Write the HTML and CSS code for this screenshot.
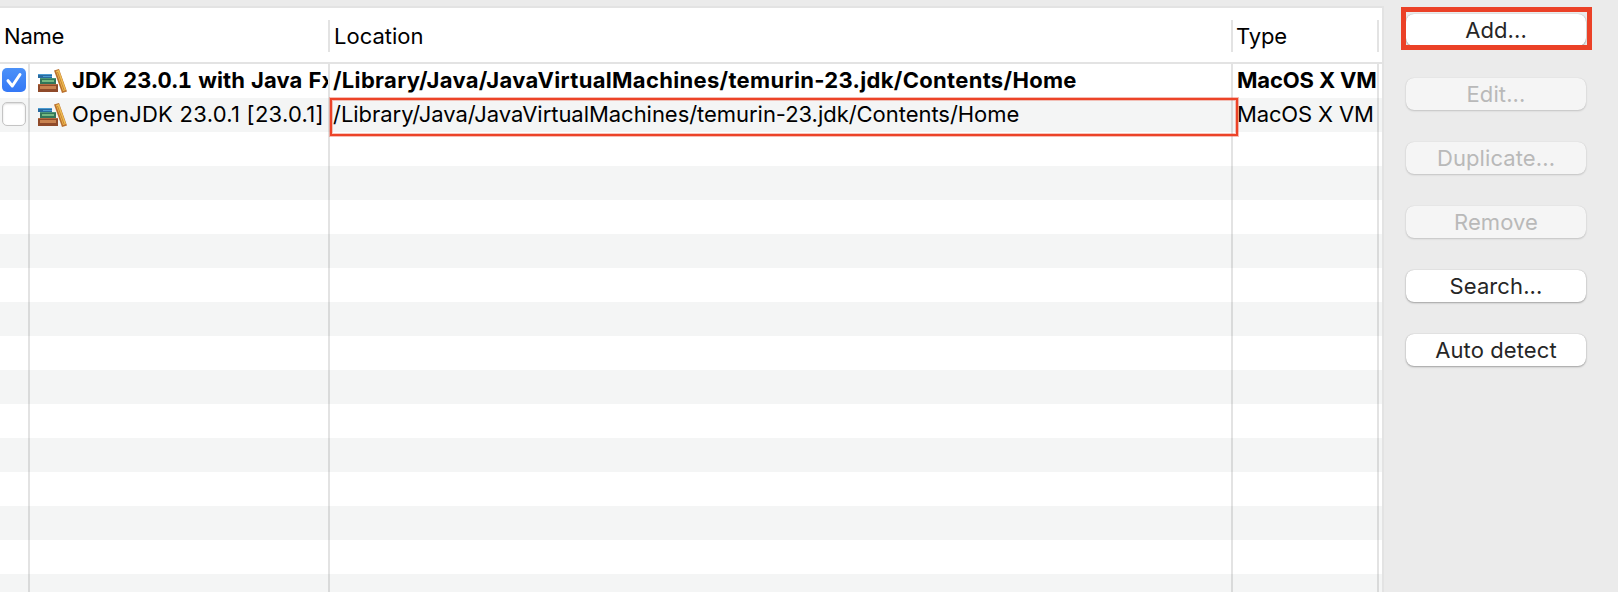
FILE: index.html
```html
<!DOCTYPE html>
<html lang="en">
<head>
<meta charset="utf-8">
<title>Installed JREs</title>
<link rel="stylesheet" href="styles.css">
</head>
<body>
<svg width="0" height="0" class="defs">
  <symbol id="books" viewBox="0 0 30 26">
    <path fill="#286aa0" d="M1 6h14v4H1z"/><path fill="#4b9bd0" d="M1 6h14v1H1zM6 8h9v1H6z"/>
    <path fill="#32765a" d="M3 10h16v6H3z"/><path fill="#75b982" d="M5 12h12v2H5z"/><path fill="#4a9677" d="M3 10h16v1H3z"/>
    <path fill="#8f4a2a" d="M1 16h20v8H1z"/><path fill="#c8824f" d="M3 18h16v3H3z"/><path fill="#b36b40" d="M1 16h20v1H1z"/>
    <path fill="#bb712e" d="M17 2.500l5-1.500 8 22.500-5 1.500z"/><path fill="#efbd53" d="M19 3l3-1 7 20-3 1z"/><path stroke="#c98532" d="M20.500 4l6.500 18"/>
  </symbol>
</svg>
<div class="window">
  <section class="table">
    <header class="row head">
      <div class="cell name"><span>Name</span></div>
      <div class="cell location"><span>Location</span></div>
      <div class="cell type"><span>Type</span></div>
      <div class="cell end"></div>
    </header>
    <div class="body">
      <div class="row strong">
        <div class="cell check"><span class="box on"><svg viewBox="0 0 24 24"><path d="M6 12.700L10.300 18L18 6.500"/></svg></span></div>
        <div class="cell title"><svg class="books"><use href="#books"/></svg><span>JDK 23.0.1 with Java Fx</span></div>
        <div class="cell location"><span>/Library/Java/JavaVirtualMachines/temurin-23.jdk/Contents/Home</span></div>
        <div class="cell type"><span>MacOS X VM</span></div><div class="cell end"></div>
      </div>
      <div class="row">
        <div class="cell check"><span class="box"></span></div>
        <div class="cell title"><svg class="books"><use href="#books"/></svg><span>OpenJDK 23.0.1 [23.0.1]</span></div>
        <div class="cell location marked"><span>/Library/Java/JavaVirtualMachines/temurin-23.jdk/Contents/Home</span></div>
        <div class="cell type"><span>MacOS X VM</span></div><div class="cell end"></div>
      </div>
      <div class="row"><div class="cell"></div><div class="cell"></div><div class="cell"></div><div class="cell"></div></div>
      <div class="row"><div class="cell"></div><div class="cell"></div><div class="cell"></div><div class="cell"></div></div>
      <div class="row"><div class="cell"></div><div class="cell"></div><div class="cell"></div><div class="cell"></div></div>
      <div class="row"><div class="cell"></div><div class="cell"></div><div class="cell"></div><div class="cell"></div></div>
      <div class="row"><div class="cell"></div><div class="cell"></div><div class="cell"></div><div class="cell"></div></div>
      <div class="row"><div class="cell"></div><div class="cell"></div><div class="cell"></div><div class="cell"></div></div>
      <div class="row"><div class="cell"></div><div class="cell"></div><div class="cell"></div><div class="cell"></div></div>
      <div class="row"><div class="cell"></div><div class="cell"></div><div class="cell"></div><div class="cell"></div></div>
      <div class="row"><div class="cell"></div><div class="cell"></div><div class="cell"></div><div class="cell"></div></div>
      <div class="row"><div class="cell"></div><div class="cell"></div><div class="cell"></div><div class="cell"></div></div>
      <div class="row"><div class="cell"></div><div class="cell"></div><div class="cell"></div><div class="cell"></div></div>
      <div class="row"><div class="cell"></div><div class="cell"></div><div class="cell"></div><div class="cell"></div></div>
      <div class="row"><div class="cell"></div><div class="cell"></div><div class="cell"></div><div class="cell"></div></div>
      <div class="row"><div class="cell"></div><div class="cell"></div><div class="cell"></div><div class="cell"></div></div>
    </div>
  </section>
  <aside class="actions">
    <button class="btn add"><span>Add...</span></button>
    <button class="btn" disabled><span>Edit...</span></button>
    <button class="btn" disabled><span>Duplicate...</span></button>
    <button class="btn" disabled><span>Remove</span></button>
    <button class="btn"><span>Search...</span></button>
    <button class="btn"><span>Auto detect</span></button>
  </aside>
</div>
</body>
</html>
```
FILE: styles.css
```css
*, *::after { box-sizing: border-box; }
body { margin: 0; background: #ebebeb; color: #000; font: 22px/34px Inter, "Liberation Sans", sans-serif; }
.defs { position: absolute; }
.window { display: flex; height: 592px; overflow: hidden; padding-top: 6px; }
.table { width: 1384px; height: 586px; overflow: hidden; border-top: 2px solid #e3e3e3; border-right: 2px solid #e3e3e3; background: #fff; }
.row { display: grid; grid-template-columns: 30px 300px 903px 146px 3px; height: 34px; }
.row:nth-child(even) { background: #f4f5f5; }
.cell { border-right: 2px solid rgba(0, 0, 0, .11); white-space: nowrap; min-width: 0; line-height: 32px; }
.cell.end { border: 0; }
.head { height: 56px; grid-template-columns: 330px 903px 146px 3px; padding: 12px 0 10px; border-bottom: 2px solid #e3e3e3; }
.name { padding-left: 4px; letter-spacing: -.2px; }
.title { display: flex; overflow: hidden; letter-spacing: .26px; }
.check { padding: 4px 0 0 2px; }
.location { padding-left: 4px; }
.type { padding-left: 4px; letter-spacing: -.15px; }
.head .type { padding-left: 3px; }
.body .location { padding-left: 3px; letter-spacing: -.04px; }
.strong { font-weight: 700; }
.strong .cell { overflow: hidden; }
.body .strong .location { letter-spacing: .32px; }
.strong .title { letter-spacing: .1px; font-variant-numeric: tabular-nums; }
.books { width: 30px; height: 26px; margin: 4px 5px 0 7px; flex: none; }
.box { display: block; width: 24px; height: 24px; border-radius: 5px; background: #fff; border: 1px solid #c4c4c4; box-shadow: inset 0 1px 2px rgba(0, 0, 0, .15); }
.box.on { border: 0; background: linear-gradient(#4c91f8, #3478f6); box-shadow: none; }
.box svg { display: block; width: 24px; height: 24px; fill: none; stroke: #fff; stroke-width: 3; stroke-linecap: round; stroke-linejoin: round; }
.marked { position: relative; }
.marked::after { content: ""; position: absolute; left: 0; top: 0; width: 908px; height: 38px; border: 2px solid #ec4328; box-shadow: 0 0 0 1px rgba(236, 67, 40, .35), inset 0 0 0 1px rgba(236, 67, 40, .3); }
.actions { display: flex; flex-direction: column; gap: 32px; padding: 8px 0 0 22px; }
.btn { width: 180px; height: 32px; padding: 0; border: 0; border-radius: 8px; background: #fff; color: #262626; font: inherit; line-height: 32px; letter-spacing: .1px; box-shadow: 0 1px 2px rgba(0, 0, 0, .3), 0 0 1px rgba(0, 0, 0, .25); }
.btn:disabled { background: #f5f5f5; color: #b9b9b9; box-shadow: 0 1px 2px rgba(0, 0, 0, .16), 0 0 1px rgba(0, 0, 0, .15); }
.add { position: relative; }
.add::after { content: ""; position: absolute; inset: -7px -6px -4px -5px; border: 5px solid #eb4127; }
```
